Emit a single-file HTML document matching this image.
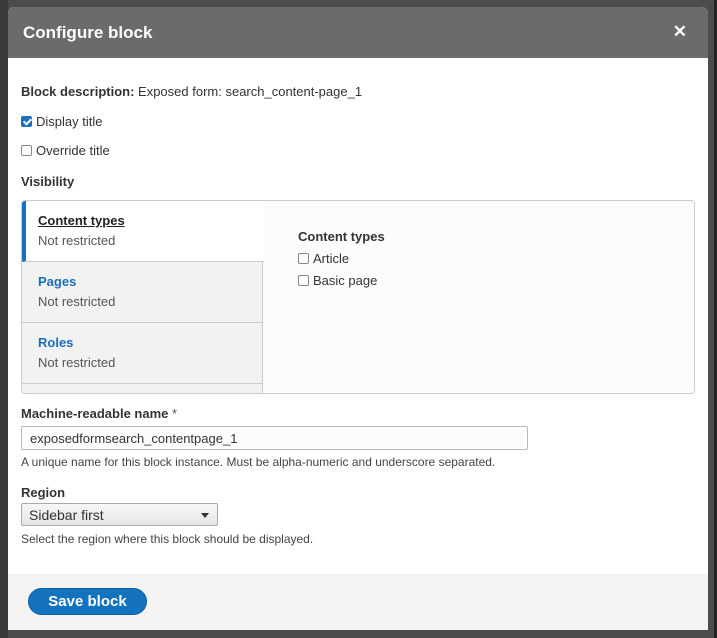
<!DOCTYPE html>
<html><head><meta charset="utf-8"><style>
*{box-sizing:border-box;margin:0;padding:0}
body{width:717px;height:638px;background:#4b4d4c;position:relative;overflow:hidden;font-family:"Liberation Sans",sans-serif;font-size:13px;color:#333}
.rb{position:absolute;left:714px;top:0;width:3px;height:638px;background:#222}
.bg{position:absolute;left:0;top:0;width:8px;height:638px;background:#3a3a3a}
.dlg{position:absolute;left:8px;top:7px;width:700px;height:623px;background:#fff;border-radius:6px 6px 0 0;overflow:hidden}
.tb{height:51px;background:#6b6b6b;color:#fff;font-weight:bold;font-size:17px;padding:16px 0 0 15px}
.x{position:absolute;right:21px;top:15px;color:#fff;font-size:17px;font-weight:bold}
.a{position:absolute;left:13px}
b{font-weight:bold}
.cb{display:inline-block;width:11px;height:11px;border:1px solid #888;border-radius:2px;vertical-align:-1px;margin-right:4px;background:#fff}
.cb.on{background:#1b6fbf;border-color:#1b6fbf;position:relative}
.cb.on:after{content:"";position:absolute;left:3px;top:0px;width:3px;height:6px;border:solid #fff;border-width:0 2px 2px 0;transform:rotate(45deg)}
.vt{position:absolute;left:13px;top:193px;width:674px;height:194px;border:1px solid #ccc;border-radius:4px;background:#fcfcfc;overflow:hidden}
.tl{position:absolute;left:0;top:0;width:241px;height:194px;background:#f2f2f0;border-right:1px solid #ccc}
.tab{position:absolute;left:0;width:241px;height:61px;border-bottom:1px solid #ccc;padding:10px 0 0 16px;line-height:20px}
.tab b{color:#1b6fbf}
.t1{top:0;background:#fff;border-left:4px solid #1b6fbf;width:242px;border-bottom:1px solid #ccc;padding-left:12px}
.t1 b{color:#222;text-decoration:underline}
.tab span{color:#555}
.in{position:absolute;left:13px;top:419px;width:507px;height:24px;border:1px solid #bbb;border-radius:2px;padding:4px 8px;font-size:13px;background:#fcfcfc}
.sel{position:absolute;left:13px;top:496px;width:197px;height:23px;border:1px solid #aaa;border-radius:2px;padding:3px 7px;font-size:14px;background:linear-gradient(#f6f6f6,#e6e6e6)}
.sel:after{content:"";position:absolute;right:8px;top:9px;border:4px solid transparent;border-top:5px solid #333}
.ft{position:absolute;left:0;top:567px;width:700px;height:56px;background:#f4f4f2;border-top:1px solid #eee}
.btn{position:absolute;left:20px;top:13px;width:119px;height:27px;border-radius:14px;background:#1473bf;border:1px solid #0f5f9f;color:#fff;font-weight:bold;font-size:15px;text-align:center;line-height:25px}
.d{font-size:12px;color:#444}
</style></head><body>
<div class="bg"></div><div class="rb"></div>
<div class="dlg">
<div class="tb">Configure block</div><div class="x">✕</div>
<div class="a" style="top:77px"><b>Block description:</b> Exposed form: search_content-page_1</div>
<div class="a" style="top:107px"><span class="cb on"></span>Display title</div>
<div class="a" style="top:136px"><span class="cb"></span>Override title</div>
<div class="a" style="top:167px"><b>Visibility</b></div>
<div class="vt">
<div class="tl">
<div class="tab t1"><b>Content types</b><br><span>Not restricted</span></div>
<div class="tab" style="top:61px"><b>Pages</b><br><span>Not restricted</span></div>
<div class="tab" style="top:122px"><b>Roles</b><br><span>Not restricted</span></div>
</div>
<div style="position:absolute;left:276px;top:25px;line-height:22px"><b>Content types</b><br><span class="cb"></span>Article<br><span class="cb"></span>Basic page</div>
</div>
<div class="a" style="top:399px"><b>Machine-readable name</b> <span style="color:#555">*</span></div>
<div class="in">exposedformsearch_contentpage_1</div>
<div class="a d" style="top:448px">A unique name for this block instance. Must be alpha-numeric and underscore separated.</div>
<div class="a" style="top:478px"><b>Region</b></div>
<div class="sel">Sidebar first</div>
<div class="a d" style="top:525px">Select the region where this block should be displayed.</div>
<div class="ft"><div class="btn">Save block</div></div>
</div>
</body></html>
